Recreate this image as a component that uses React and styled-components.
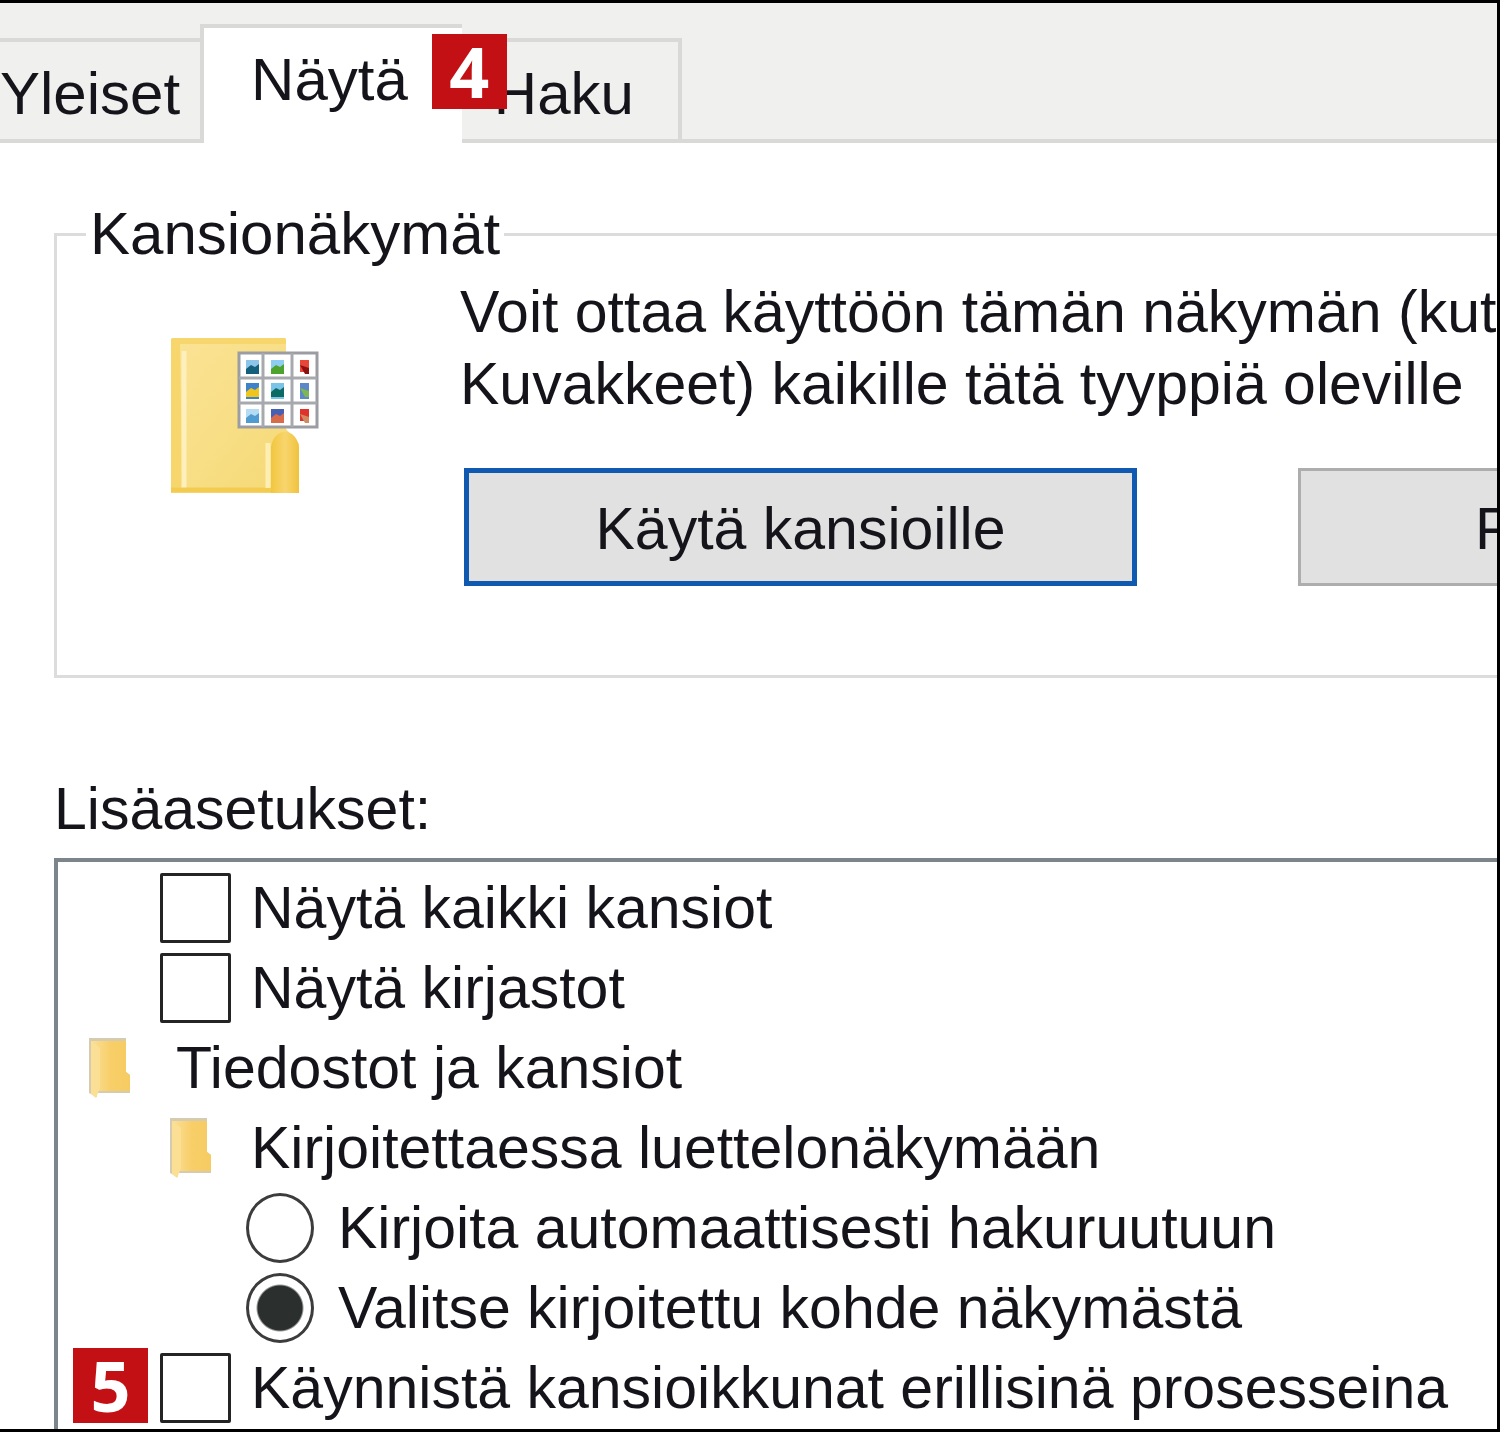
import React, { useState } from 'react';
import styled, { createGlobalStyle, css } from 'styled-components';

const GlobalStyle = createGlobalStyle`
  * {
    box-sizing: border-box;
  }

  body {
    margin: 0;
    background-color: #fff;
    color: #14141a;
    font-family: 'Liberation Sans', Arial, sans-serif;
    font-size: 59px;
  }

  button, input {
    margin: 0;
    color: inherit;
    font: inherit;
  }
`;

const Window = styled.main`
  width: 100%;
  overflow: hidden;
  border: 3px solid #000;
  border-left: none;
  background-color: #fff;
`;

const TabBar = styled.div`
  display: flex;
  align-items: flex-end;
  height: 140px;
  background-color: #f0f0ee;
  box-shadow: inset 0 -4px #d9dad8;
`;

const Tab = styled.button`
  height: 105px;
  padding: ${({ $pad }) => $pad};
  border: solid #d9dad8;
  border-width: 4px 0;
  background-color: #f0f0ee;
  font-size: 60px;
  line-height: 72px;
  text-align: left;
  white-space: nowrap;

  ${({ $last }) => $last && css`
    border-right-width: 4px;
  `}

  ${({ $selected }) => $selected && css`
    position: relative;
    height: 119px;
    border-width: 4px 0 0 4px;
    background-color: #fff;
  `}
`;

const Badge = styled.span`
  flex: none;
  width: 75px;
  height: 75px;
  background-color: #c31014;
  color: #fff;
  font-family: 'Open Sans', sans-serif;
  font-size: 70px;
  font-weight: 700;
  line-height: 75px;
  text-align: center;
`;

const TabBadge = styled(Badge)`
  position: absolute;
  top: 6px;
  right: -45px;
`;

const Panel = styled.section`
  padding: 57px 0 0 54px;
`;

const Group = styled.fieldset`
  display: flex;
  min-width: 0;
  margin: 0;
  padding: 8px 0 89px 29px;
  border: 3px solid #dcdcdc;
  border-right: none;
`;

const GroupTitle = styled.legend`
  padding: 0 4px;
  font-size: 60px;
  line-height: 68px;
`;

const GroupIcon = styled.div`
  flex: none;
  width: 374px;
  padding: 59px 0 0 82px;

  svg {
    display: block;
  }
`;

const GroupBody = styled.div`
  min-width: 0;
`;

const Description = styled.p`
  margin: 0 0 48px;
  line-height: 72px;
  white-space: nowrap;
`;

const ButtonRow = styled.div`
  display: flex;
  gap: 161px;
  padding-left: 4px;
`;

const PushButton = styled.button`
  flex: none;
  width: 673px;
  height: 118px;
  padding: 4px 0 0;
  border: ${({ $primary }) => ($primary ? '5px solid #1059b0' : '3px solid #adadad')};
  background-color: #e1e1e1;
  text-align: ${({ $primary }) => ($primary ? 'center' : 'left')};
  text-indent: ${({ $primary }) => ($primary ? '0' : '174px')};
`;

const ListTitle = styled.h2`
  margin: 95px 0 13px;
  font-size: inherit;
  font-weight: 400;
  line-height: 72px;
`;

const SettingsList = styled.ul`
  margin: 0;
  padding: 6px 0 1px;
  border: solid #7c858b;
  border-width: 4px 0 0 4px;
  list-style: none;
`;

const SettingsRow = styled.li`
  display: flex;
  align-items: center;
  gap: ${({ $gap }) => $gap}px;
  height: 80px;
  padding-left: ${({ $indent }) => $indent}px;
  line-height: 80px;
  white-space: nowrap;

  svg {
    flex: none;
  }
`;

const RowBadge = styled(Badge)`
  align-self: flex-start;
  margin-right: -8px;
`;

const Checkbox = styled.input`
  flex: none;
  width: 71px;
  height: 70px;
  appearance: none;
  border: 3px solid #242424;
  border-radius: 2px;
  background-color: #fff;

  &:checked {
    background-color: #2b2f2e;
    box-shadow: inset 0 0 0 10px #fff;
  }
`;

const Radio = styled.input`
  flex: none;
  width: 68px;
  height: 70px;
  appearance: none;
  border: 3px solid #3c3c3c;
  border-radius: 50%;
  background-color: #fff;

  &:checked {
    background: radial-gradient(circle, #2b2f2e 22px, #fff 24px);
  }
`;

const THUMBS = [
  ['#8cc4ea', '#14607c'], ['#8fcdf0', '#4ea32c'], ['#e9463a', '#8d1111'],
  ['#3e83c9', '#f0c61c'], ['#7cc3e8', '#0d6a62'], ['#5c87c8', '#7fb553'],
  ['#b5dcf5', '#4f9dd0'], ['#4860b4', '#d96b4b'], ['#e0322a', '#d18a62'],
];

const FolderViewIcon = () => (
  <svg width="154" height="162" viewBox="0 0 154 162" aria-hidden="true">
    <defs>
      <linearGradient id="folderBody" x1="0" y1="0" x2="1" y2="1">
        <stop offset="0" stopColor="#fbe396" />
        <stop offset="1" stopColor="#f5d975" />
      </linearGradient>
      <linearGradient id="folderFlap" x1="0" y1="0" x2="1" y2="0">
        <stop offset="0" stopColor="#f1c63e" />
        <stop offset="0.5" stopColor="#f8d56d" />
        <stop offset="1" stopColor="#f0c33e" />
      </linearGradient>
    </defs>
    <path d="M3 5q0-2 2-2h111q2 0 2 2v89l13 15v49H3z" fill="url(#folderBody)" />
    <path d="M3 5q0-2 2-2h111q2 0 2 2v4H12l2 142-11 7z" fill="#f6d66d" />
    <path d="M16 16v137" stroke="#fdf0bd" strokeWidth="5" />
    <path d="M3 155h128" stroke="#f3cb50" strokeWidth="5" />
    <path d="M100 153v-45" stroke="#fdeeb4" strokeWidth="5" />
    <path d="M103 158v-46q1-8 7-13 7-5 14 0 6 5 7 13v46z" fill="url(#folderFlap)" />
    <rect x="71" y="18" width="78" height="74" fill="#fff" stroke="#9c9da3" strokeWidth="3" />
    <path d="M95 18v74M124 18v74M71 43h78M71 68h78" stroke="#a8a9ae" strokeWidth="3" />
    {THUMBS.map(([top, bottom], index) => {
      const x = [78, 103, 132][index % 3];
      const y = [25, 48, 74][Math.floor(index / 3)];
      return (
        <g key={index}>
          <rect x={x} y={y} width={index % 3 === 2 ? 9 : 13} height={index > 2 && index < 6 ? 16 : 12} fill={top} />
          <path
            d={index % 3 === 2
              ? `M${x} ${y + 5}l9 3v6h-4z`
              : `M${x} ${y + 9}l5-4 4 2 4-3v10h-13z`}
            fill={bottom}
          />
        </g>
      );
    })}
  </svg>
);

const SmallFolderIcon = () => (
  <svg width="44" height="62" viewBox="0 0 44 62" aria-hidden="true">
    <defs>
      <linearGradient id="smallFolder" x1="0" y1="0" x2="1" y2="0">
        <stop offset="0" stopColor="#fae09a" />
        <stop offset="0.5" stopColor="#f8ce68" />
        <stop offset="1" stopColor="#f6cb62" />
      </linearGradient>
    </defs>
    <path d="M1 1h37v34l4 3v18H9v4l-8-4z" fill="#d5cbb0" />
    <path d="M3 4h35v31l4 3v16H9V16z" fill="url(#smallFolder)" />
    <path d="M3 4l9 7v40l-4 10-5-4z" fill="#fbdf94" />
  </svg>
);

const SETTINGS = [
  { id: 'allFolders', type: 'checkbox', text: 'Näytä kaikki kansiot', indent: 102, gap: 20 },
  { id: 'libraries', type: 'checkbox', text: 'Näytä kirjastot', indent: 102, gap: 20 },
  { id: 'files', type: 'folder', text: 'Tiedostot ja kansiot', indent: 30, gap: 44 },
  { id: 'typing', type: 'folder', text: 'Kirjoitettaessa luettelonäkymään', indent: 111, gap: 38 },
  { id: 'search', type: 'radio', text: 'Kirjoita automaattisesti hakuruutuun', indent: 188, gap: 24 },
  { id: 'select', type: 'radio', text: 'Valitse kirjoitettu kohde näkymästä', indent: 188, gap: 24 },
  { id: 'process', type: 'checkbox', text: 'Käynnistä kansioikkunat erillisinä prosesseina', indent: 15, gap: 20, badge: 5 },
];

const App = () => {
  const [checked, setChecked] = useState({});
  const [typing, setTyping] = useState('select');

  return (
    <>
      <GlobalStyle />
      <Window>
        <TabBar role="tablist">
          <Tab type="button" role="tab" aria-selected="false" $pad="6px 20px 0 0">Yleiset</Tab>
          <Tab type="button" role="tab" aria-selected="true" $selected $pad="0 54px 12px 47px">
            Näytä
            <TabBadge>4</TabBadge>
          </Tab>
          <Tab type="button" role="tab" aria-selected="false" $last $pad="6px 44px 0 32px">Haku</Tab>
        </TabBar>
        <Panel>
          <Group>
            <GroupTitle>Kansionäkymät</GroupTitle>
            <GroupIcon><FolderViewIcon /></GroupIcon>
            <GroupBody>
              <Description>
                Voit ottaa käyttöön tämän näkymän (kute<br />
                Kuvakkeet) kaikille tätä tyyppiä oleville
              </Description>
              <ButtonRow>
                <PushButton type="button" $primary>Käytä kansioille</PushButton>
                <PushButton type="button">P</PushButton>
              </ButtonRow>
            </GroupBody>
          </Group>
          <ListTitle>Lisäasetukset:</ListTitle>
          <SettingsList>
            {SETTINGS.map(({ id, type, text, indent, gap, badge }) => (
              <SettingsRow key={id} $indent={indent} $gap={gap}>
                {badge && <RowBadge>{badge}</RowBadge>}
                {type === 'folder' && <SmallFolderIcon />}
                {type === 'checkbox' && (
                  <Checkbox
                    id={id}
                    type="checkbox"
                    checked={!!checked[id]}
                    onChange={(e) => setChecked({ ...checked, [id]: e.target.checked })}
                  />
                )}
                {type === 'radio' && (
                  <Radio id={id} type="radio" name="typing" checked={typing === id} onChange={() => setTyping(id)} />
                )}
                {type === 'folder' ? <span>{text}</span> : <label htmlFor={id}>{text}</label>}
              </SettingsRow>
            ))}
          </SettingsList>
        </Panel>
      </Window>
    </>
  );
};

export default App;
